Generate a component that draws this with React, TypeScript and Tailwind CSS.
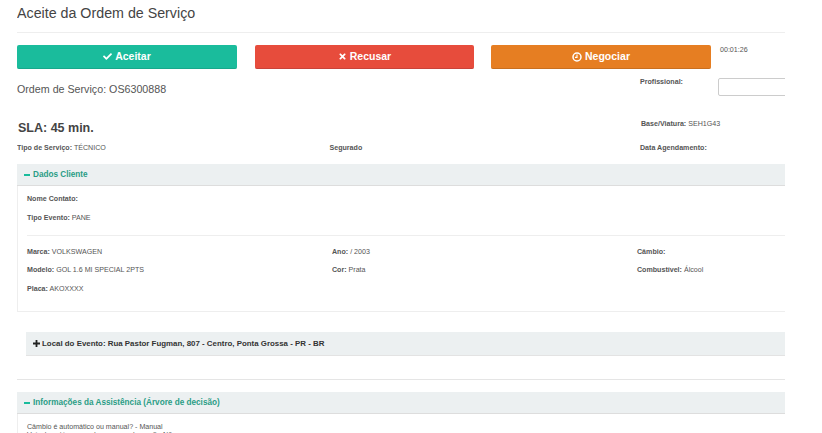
import { FaCheck, FaTimes } from "react-icons/fa";

function Field({ label, value }: { label: string; value?: string }) {
  return (
    <p className="text-[7.1px] leading-[8px] text-[#555]">
      <b className="font-bold">{label}</b> {value}
    </p>
  );
}

export default function App() {
  return (
    <div className="h-[433px] w-[822px] overflow-hidden bg-white font-['Liberation_Sans',Arial,sans-serif] text-[#333]">
      <div className="ml-[17px] w-[768px] overflow-hidden">
        <h1 className="h-[33px] border-b border-[#eee] pt-[5px] text-[14.25px] leading-[16px] text-[#444]">
          Aceite da Ordem de Serviço
        </h1>

        <div className="mt-[12px] flex">
          <button className="flex h-[24px] w-[220px] items-center justify-center gap-[3px] rounded-[2px] border-b border-[#17a88b] bg-[#1abc9c] text-[10.5px] font-bold text-white">
            <FaCheck size={9} />
            Aceitar
          </button>
          <button className="ml-[18px] flex h-[24px] w-[219px] items-center justify-center gap-[3px] rounded-[2px] border-b border-[#c9433a] bg-[#e74c3c] text-[10.5px] font-bold text-white">
            <FaTimes size={9} />
            Recusar
          </button>
          <button className="ml-[17px] flex h-[24px] w-[220px] items-center justify-center gap-[3px] rounded-[2px] border-b border-[#c96f1f] bg-[#e67e22] text-[10.5px] font-bold text-white">
            <svg width="10" height="10" viewBox="0 0 10 10" fill="none" stroke="white">
              <circle cx="5" cy="5" r="4" strokeWidth="1.5" />
              <path d="M5 2.6V5.4H3" strokeWidth="1.1" />
            </svg>
            Negociar
          </button>
          <span className="ml-[9px] pt-[1px] text-[7.1px] leading-[8px] text-[#555]">00:01:26</span>
        </div>

        <div className="flex h-[32px]">
          <p className="w-[623px] shrink-0 pt-[14px] text-[10.7px] leading-[12px] text-[#555]">Ordem de Serviço: OS6300888</p>
          <p className="w-[78px] shrink-0 pt-[9px] text-[7.1px] leading-[8px] font-bold text-[#555]">Profissional:</p>
          <div className="mt-[9px] h-[18px] w-[80px] shrink-0 rounded-[2px] border border-[#ccc]" />
        </div>

        <div className="mt-[19px] flex h-[20px]">
          <p className="ml-[1px] w-[623px] pt-[1px] text-[12.5px] leading-[14px] font-bold text-[#444]">SLA: 45 min.</p>
          <Field label="Base/Viatura:" value="SEH1G43" />
        </div>

        <div className="mt-[4px] flex h-[14px]">
          <div className="w-[312.5px]">
            <Field label="Tipo de Serviço:" value="TÉCNICO" />
          </div>
          <div className="w-[310.5px]">
            <Field label="Segurado" />
          </div>
          <Field label="Data Agendamento:" />
        </div>

        <section className="mt-[6px] flex h-[148px] flex-col border-b border-[#eee]">
          <div className="flex h-[22px] shrink-0 items-center gap-[3px] border-b border-[#ddd] bg-[#ecf0f1] pl-[7px] text-[8.2px] font-bold text-[#2a9d85]">
            <span className="h-[2px] w-[6px] bg-[#1abc9c]" />
            <span className="pt-[2px]">Dados Cliente</span>
          </div>
          <div className="flex-1 border-l border-[#eee] pt-[9px] pl-[9px]">
            <Field label="Nome Contato:" />
            <div className="mt-[11px]">
              <Field label="Tipo Evento:" value="PANE" />
            </div>
            <div className="mt-[13px] border-t border-[#eee] pt-[12px]">
              <div className="flex">
                <div className="w-[305px]">
                  <Field label="Marca:" value="VOLKSWAGEN" />
                </div>
                <div className="w-[305px]">
                  <Field label="Ano:" value="/ 2003" />
                </div>
                <Field label="Câmbio:" />
              </div>
              <div className="mt-[10px] flex">
                <div className="w-[305px]">
                  <Field label="Modelo:" value="GOL 1.6 MI SPECIAL 2PTS" />
                </div>
                <div className="w-[305px]">
                  <Field label="Cor:" value="Prata" />
                </div>
                <Field label="Combustível:" value="Álcool" />
              </div>
              <div className="mt-[11px]">
                <Field label="Placa:" value="AKOXXXX" />
              </div>
            </div>
          </div>
        </section>

        <div className="mt-[20px] ml-[9px] flex h-[24px] items-center gap-[2px] border-b border-[#e3e3e3] bg-[#ecf0f1] pl-[7px] text-[7.9px] font-bold text-[#333]">
          <svg width="7" height="7" viewBox="0 0 7 7" fill="#222">
            <path d="M2.6 0h1.8v2.6H7v1.8H4.4V7H2.6V4.4H0V2.6h2.6z" />
          </svg>
          Local do Evento: Rua Pastor Fugman, 807 - Centro, Ponta Grossa - PR - BR
        </div>

        <div className="mt-[23px] border-t border-[#e5e5e5]" />

        <section className="mt-[12px]">
          <div className="flex h-[22px] items-center gap-[3px] border-b border-[#ddd] bg-[#ecf0f1] pl-[7px] text-[8.2px] font-bold text-[#2a9d85]">
            <span className="h-[2px] w-[6px] bg-[#1abc9c]" />
            <span className="pt-[2px]">Informações da Assistência (Árvore de decisão)</span>
          </div>
          <div className="border-l border-[#eee] pt-[9px] pl-[9px] text-[7.1px] leading-[8px] text-[#555]">
            <p>Câmbio é automático ou manual? - Manual</p>
            <p>Veículo está carregado ou com reboque? - Não</p>
          </div>
        </section>
      </div>
    </div>
  );
}
